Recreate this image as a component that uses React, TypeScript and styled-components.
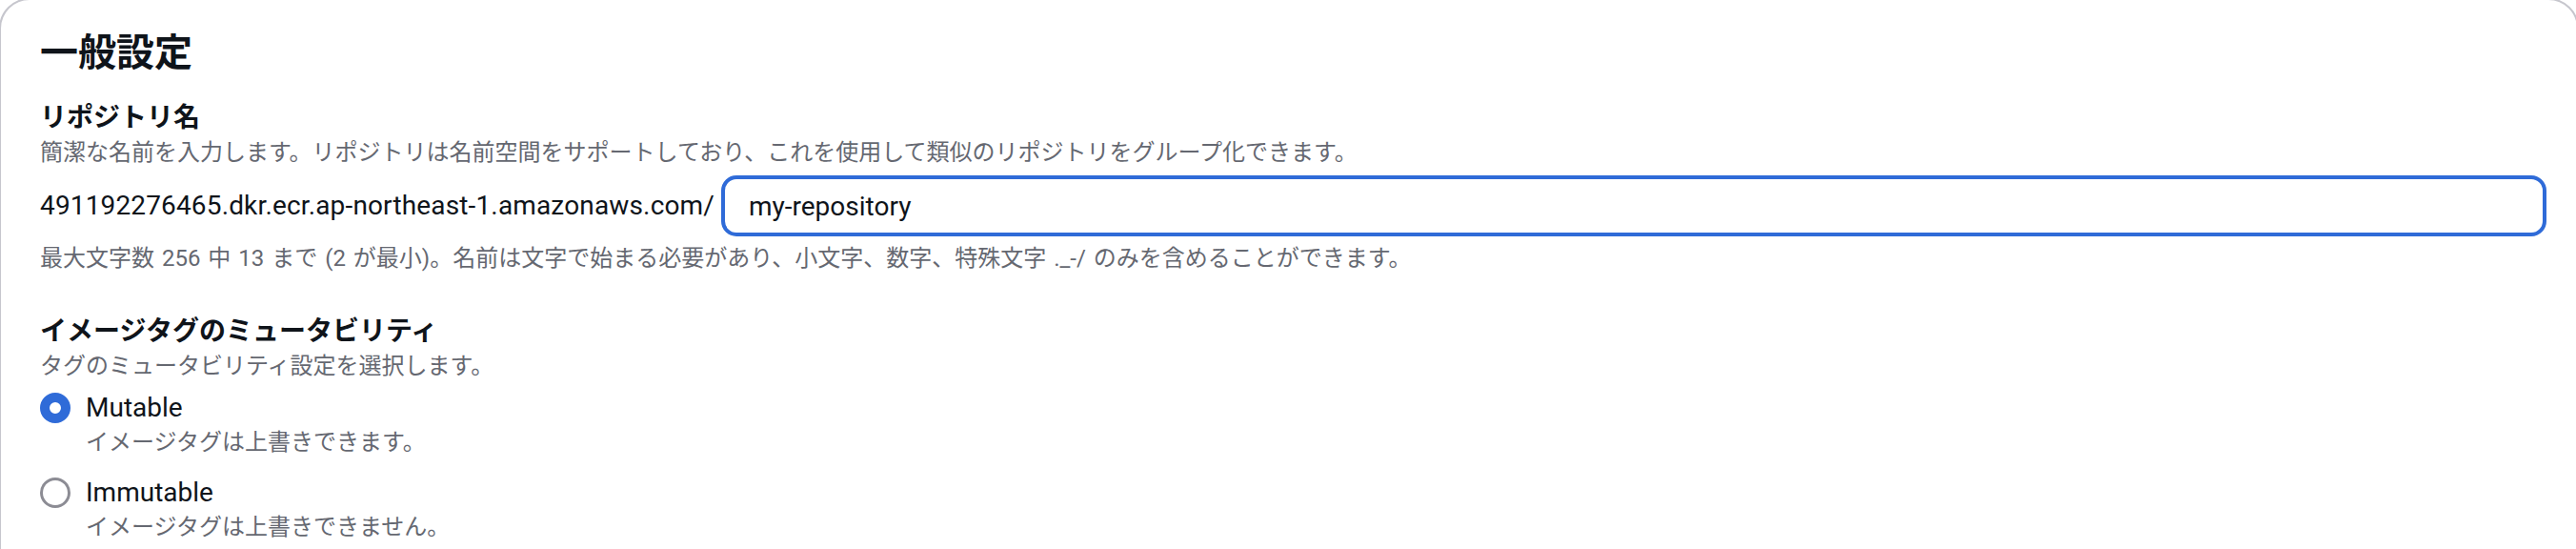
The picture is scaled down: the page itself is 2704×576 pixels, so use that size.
import React from "react";
import styled, { createGlobalStyle } from "styled-components";

const GlobalStyle = createGlobalStyle`
  html, body {
    margin: 0;
    padding: 0;
    overflow: hidden;
    background: #ffffff;
  }
  body {
    font-family: Roboto, "Noto Sans CJK JP", sans-serif;
    color: #0f141a;
  }
`;

type RadioOption = {
  value: string;
  label: string;
  description: string;
};

const mutabilityOptions: RadioOption[] = [
  {
    value: "MUTABLE",
    label: "Mutable",
    description: "イメージタグは上書きできます。",
  },
  {
    value: "IMMUTABLE",
    label: "Immutable",
    description: "イメージタグは上書きできません。",
  },
];

export default function App() {
  const selected = "MUTABLE";

  return (
    <>
      <GlobalStyle />
      <Card>
        <Heading>一般設定</Heading>

        <Field>
          <Label>リポジトリ名</Label>
          <Description>
            簡潔な名前を入力します。リポジトリは名前空間をサポートしており、これを使用して類似のリポジトリをグループ化できます。
          </Description>
          <ControlRow>
            <Prefix>491192276465.dkr.ecr.ap-northeast-1.amazonaws.com/</Prefix>
            <TextInput value="my-repository" readOnly />
          </ControlRow>
          <Constraint>
            最大文字数 256 中 13 まで (2 が最小)。名前は文字で始まる必要があり、小文字、数字、特殊文字 ._-/ のみを含めることができます。
          </Constraint>
        </Field>

        <Field $spaced>
          <Label>イメージタグのミュータビリティ</Label>
          <Description>タグのミュータビリティ設定を選択します。</Description>
          <RadioGroup>
            {mutabilityOptions.map((option) => (
              <RadioItem key={option.value}>
                <RadioCircle $checked={option.value === selected} />
                <RadioText>
                  <RadioLabel>{option.label}</RadioLabel>
                  <RadioDescription>{option.description}</RadioDescription>
                </RadioText>
              </RadioItem>
            ))}
          </RadioGroup>
        </Field>
      </Card>
    </>
  );
}

const Card = styled.section`
  margin: -2px -3px 0 -1px;
  border: 2px solid #c6c6cd;
  border-radius: 32px;
  padding: 32px 32px 40px 41px;
  background: #ffffff;
`;

const Heading = styled.h2`
  margin: 0;
  font-size: 40px;
  line-height: 48px;
  font-weight: 700;
  color: #0f141a;
`;

const Field = styled.div<{ $spaced?: boolean }>`
  margin-top: ${({ $spaced }) => ($spaced ? "41px" : "24px")};
  display: flex;
  flex-direction: column;
`;

const Label = styled.div`
  font-size: 28px;
  line-height: 40px;
  font-weight: 700;
  color: #0f141a;
`;

const Description = styled.div`
  font-size: 24px;
  line-height: 32px;
  color: #656871;
`;

const ControlRow = styled.div`
  display: flex;
  align-items: center;
  margin-top: 8px;
`;

const Prefix = styled.span`
  font-size: 28px;
  line-height: 40px;
  letter-spacing: 0.15px;
  color: #0f141a;
  white-space: nowrap;
  margin-right: 7px;
`;

const TextInput = styled.input`
  flex: 1;
  box-sizing: border-box;
  height: 64px;
  border: 4px solid #2f6bd8;
  border-radius: 16px;
  padding: 0 24px 0 25px;
  font-family: Roboto, "Noto Sans CJK JP", sans-serif;
  font-size: 28px;
  color: #0f141a;
  background: #ffffff;
  outline: none;
`;

const Constraint = styled.div`
  margin-top: 7px;
  font-size: 24px;
  line-height: 32px;
  color: #656871;
  word-spacing: 2px;
`;

const RadioGroup = styled.div`
  display: flex;
  flex-direction: column;
  gap: 17px;
  margin-top: 8px;
`;

const RadioItem = styled.div`
  display: flex;
  align-items: flex-start;
  gap: 16px;
`;

const RadioCircle = styled.span<{ $checked?: boolean }>`
  box-sizing: border-box;
  flex: none;
  width: 32px;
  height: 32px;
  margin-top: 4px;
  border-radius: 50%;
  background: #ffffff;
  border: ${({ $checked }) =>
    $checked ? "10px solid #2f6bd8" : "3px solid #8c8c94"};
`;

const RadioText = styled.div`
  display: flex;
  flex-direction: column;
`;

const RadioLabel = styled.span`
  font-size: 28px;
  line-height: 40px;
  color: #0f141a;
`;

const RadioDescription = styled.span`
  font-size: 24px;
  line-height: 32px;
  color: #656871;
`;
